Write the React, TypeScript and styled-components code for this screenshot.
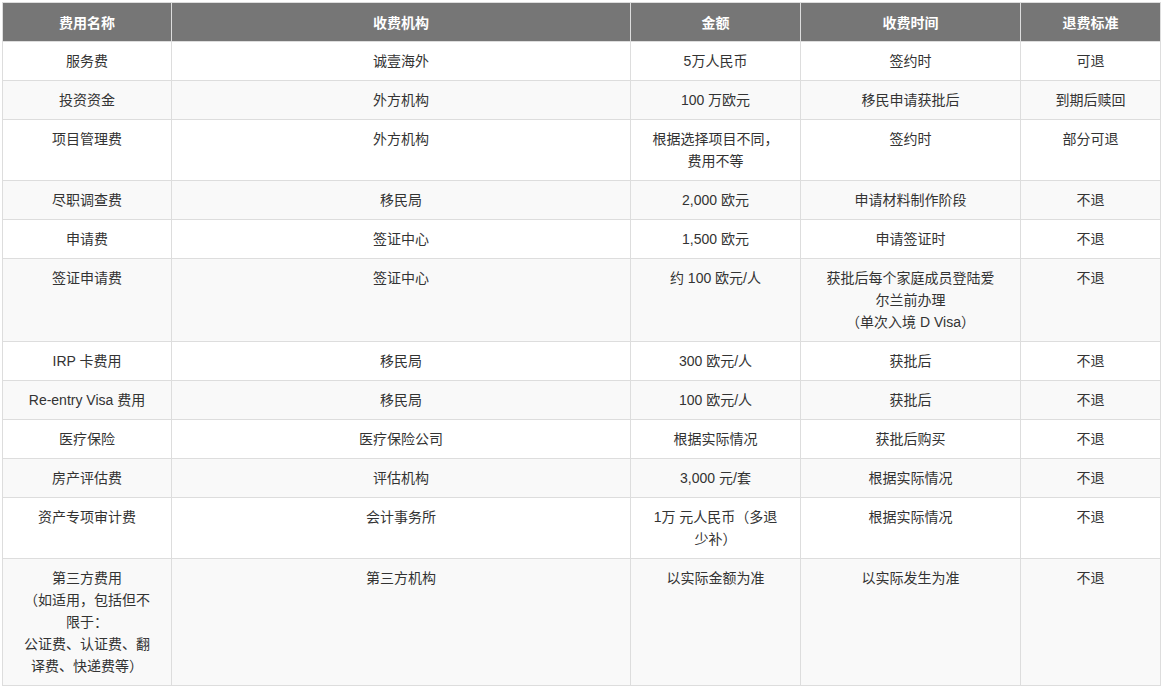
import React from "react";
import styled, { createGlobalStyle } from "styled-components";

const Global = createGlobalStyle`
  body { margin: 0; padding: 2px; background: #fff; font-family: "Liberation Sans", "Noto Sans CJK SC", sans-serif; }
`;

const Table = styled.table`
  border-collapse: collapse;
  table-layout: fixed;
  width: 1158px;
  font-size: 14px;
  color: #333;
`;
const Th = styled.th`
  background: #767676;
  color: #fff;
  font-weight: bold;
  height: 38px;
  padding: 0 8px;
  border: 1px solid #ddd;
  text-align: center;
`;
const Tr = styled.tr<{ $alt: boolean }>`
  background: ${(p) => (p.$alt ? "#f9f9f9" : "#fff")};
`;
const Td = styled.td`
  border: 1px solid #ddd;
  padding: 8px 8px;
  line-height: 22px;
  text-align: center;
  vertical-align: top;
  white-space: pre-line;
`;

const widths = [169, 459, 170, 220, 140];
const head = ["费用名称", "收费机构", "金额", "收费时间", "退费标准"];
const rows: string[][] = [
  ["服务费", "诚壹海外", "5万人民币", "签约时", "可退"],
  ["投资资金", "外方机构", "100 万欧元", "移民申请获批后", "到期后赎回"],
  ["项目管理费", "外方机构", "根据选择项目不同，\n费用不等", "签约时", "部分可退"],
  ["尽职调查费", "移民局", "2,000 欧元", "申请材料制作阶段", "不退"],
  ["申请费", "签证中心", "1,500 欧元", "申请签证时", "不退"],
  ["签证申请费", "签证中心", "约 100 欧元/人", "获批后每个家庭成员登陆爱\n尔兰前办理\n（单次入境 D Visa）", "不退"],
  ["IRP 卡费用", "移民局", "300 欧元/人", "获批后", "不退"],
  ["Re-entry Visa 费用", "移民局", "100 欧元/人", "获批后", "不退"],
  ["医疗保险", "医疗保险公司", "根据实际情况", "获批后购买", "不退"],
  ["房产评估费", "评估机构", "3,000 元/套", "根据实际情况", "不退"],
  ["资产专项审计费", "会计事务所", "1万 元人民币（多退\n少补）", "根据实际情况", "不退"],
  ["第三方费用\n（如适用，包括但不\n限于：\n公证费、认证费、翻\n译费、快递费等）", "第三方机构", "以实际金额为准", "以实际发生为准", "不退"],
];

export default function App() {
  return (
    <>
      <Global />
      <Table>
        <colgroup>
          {widths.map((w, i) => (
            <col key={i} style={{ width: w }} />
          ))}
        </colgroup>
        <thead>
          <tr>
            {head.map((h) => (
              <Th key={h}>{h}</Th>
            ))}
          </tr>
        </thead>
        <tbody>
          {rows.map((r, i) => (
            <Tr key={i} $alt={i % 2 === 1}>
              {r.map((c, j) => (
                <Td key={j}>{c}</Td>
              ))}
            </Tr>
          ))}
        </tbody>
      </Table>
    </>
  );
}
